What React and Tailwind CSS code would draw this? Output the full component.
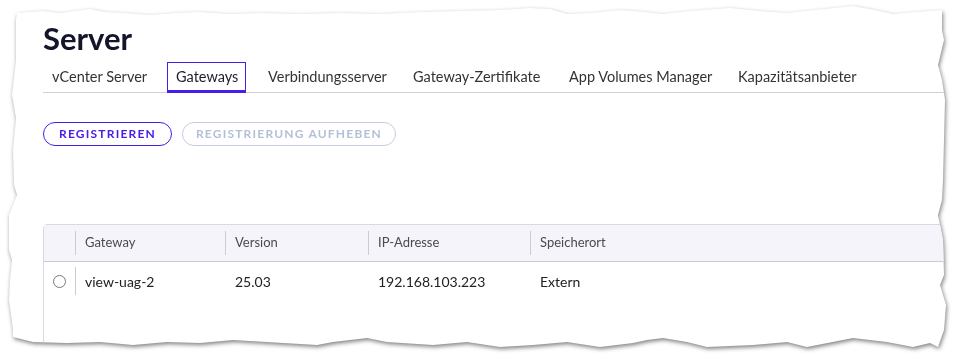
import React from "react";

const tabs = [
  { label: "vCenter Server", w: "w-[110px] mr-[14px]" },
  { label: "Gateways", w: "w-[79px] mr-[13px]", active: true },
  { label: "Verbindungsserver", w: "w-[134px] mr-[11px]" },
  { label: "Gateway-Zertifikate", w: "w-[145px] mr-[11px]" },
  { label: "App Volumes Manager", w: "w-[158px] mr-[11px]" },
  { label: "Kapazitätsanbieter", w: "w-[140px]" },
];

export default function App() {
  return (
    <div className="w-[959px] h-[359px] bg-white overflow-hidden">
      <div className="drop-shadow-[1px_2px_2px_rgba(0,0,0,0.5)]">
        <div className="h-[359px] bg-white font-['Lato',sans-serif] [clip-path:polygon(17px_13px,28px_12px,43px_11px,60px_13px,75px_11px,90px_9px,105px_12px,125px_13px,150px_15px,175px_13px,200px_12px,230px_14px,260px_13px,300px_14px,340px_13px,380px_14px,420px_12px,460px_11px,500px_10px,530px_8px,550px_9px,567px_14px,590px_13px,620px_10px,645px_12px,663px_14px,690px_11px,730px_8px,760px_11px,787px_13px,815px_10px,853px_6px,875px_10px,893px_14px,915px_12px,942px_10px,942px_30px,944px_40px,938px_65px,942px_80px,945px_100px,944px_140px,943px_180px,942px_200px,938px_215px,943px_240px,944px_275px,940px_285px,946px_305px,944px_330px,938px_347px,930px_343px,913px_347px,887px_342px,853px_338px,807px_347px,787px_342px,753px_345px,707px_347px,687px_342px,663px_338px,647px_340px,633px_343px,600px_347px,567px_342px,533px_345px,500px_347px,467px_342px,433px_345px,387px_342px,367px_338px,333px_342px,317px_345px,267px_342px,233px_340px,200px_343px,167px_342px,133px_345px,100px_342px,67px_343px,33px_342px,13px_337px,13px_330px,9px_300px,10px_280px,12px_260px,9px_250px,9px_215px,17px_195px,14px_185px,13px_150px,16px_118px,12px_95px,16px_60px,16px_20px)]">
          <div className="pl-[43px] pt-[20px]">
            <h1 className="text-[31px] leading-[36px] font-bold text-[#14142b]">Server</h1>

            <div className="mt-[6px] flex items-end border-b border-[#d0d0d6]">
              {tabs.map((t) => (
                <div
                  key={t.label}
                  className={`${t.w} h-[31px] -mb-px px-2 flex items-center text-[14.5px] whitespace-nowrap border border-b-[3px] ${
                    t.active ? "border-[#4a1de6] text-[#1d1d2b]" : "border-transparent text-[#333]"
                  }`}
                >
                  {t.label}
                </div>
              ))}
            </div>

            <div className="mt-[29px] flex gap-[10px]">
              <button className="w-[129px] h-[24px] rounded-full border border-[#4a1de6] text-[#4a1de6] text-[12px] font-bold tracking-[1.2px]">
                REGISTRIEREN
              </button>
              <button className="w-[214px] h-[24px] rounded-full border border-[#c4cde0] text-[#b4bfd8] text-[12px] font-bold tracking-[1.2px]">
                REGISTRIERUNG AUFHEBEN
              </button>
            </div>

            <div className="mt-[78px] h-[160px] w-[1000px] border border-[#d8d8e2] rounded-tl-[4px]">
              <div className="flex h-[37px] bg-[#f4f4fa] border-b border-[#cbcbd2] text-[13px] text-[#4a4a55]">
                <div className="w-[31px]" />
                <div className="w-[150px] my-[6px] border-l border-[#cbcbd2] pl-[9px] flex items-center">Gateway</div>
                <div className="w-[143px] my-[6px] border-l border-[#cbcbd2] pl-[9px] flex items-center">Version</div>
                <div className="w-[162px] my-[6px] border-l border-[#cbcbd2] pl-[9px] flex items-center">IP-Adresse</div>
                <div className="flex-1 my-[6px] border-l border-[#cbcbd2] pl-[9px] flex items-center">Speicherort</div>
              </div>
              <div className="flex h-[38px] text-[14px] text-[#222]">
                <div className="w-[31px] flex items-center justify-center">
                  <span className="w-[13px] h-[13px] rounded-full border border-[#777] bg-white" />
                </div>
                <div className="w-[150px] my-[5px] border-l border-[#cbcbd2] pl-[9px] flex items-center">view-uag-2</div>
                <div className="w-[143px] pl-[10px] flex items-center">25.03</div>
                <div className="w-[162px] pl-[10px] flex items-center">192.168.103.223</div>
                <div className="flex-1 pl-[10px] flex items-center">Extern</div>
              </div>
            </div>
          </div>
        </div>
      </div>
    </div>
  );
}
